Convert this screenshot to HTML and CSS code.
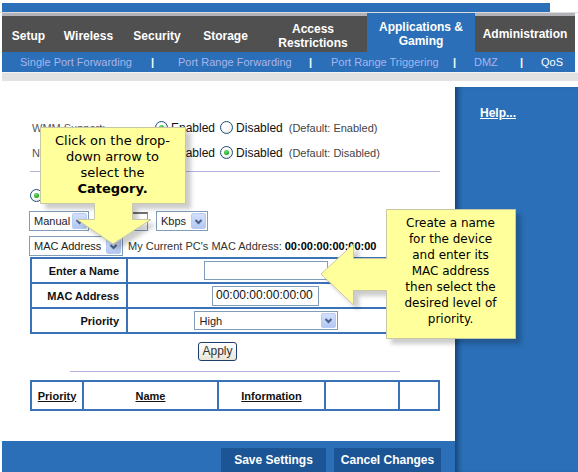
FILE: index.html
```html
<!DOCTYPE html>
<html>
<head>
<meta charset="utf-8">
<link rel="stylesheet" href="styles.css">
</head>
<body>
<div class="page">
  <div class="topband"><div class="topblue"></div></div>
  <nav class="tabs">
    <div class="tab t-setup">Setup</div>
    <div class="tab t-wireless">Wireless</div>
    <div class="tab t-security">Security</div>
    <div class="tab t-storage">Storage</div>
    <div class="tab t-access">Access<br>Restrictions</div>
    <div class="tab t-apps active">Applications &amp;<br>Gaming</div>
    <div class="tab t-admin">Administration</div>
  </nav>
  <div class="subnav">
    <span class="sublink l1">Single Port Forwarding</span><span class="sep p1">|</span>
    <span class="sublink l2">Port Range Forwarding</span><span class="sep p2">|</span>
    <span class="sublink l3">Port Range Triggering</span><span class="sep p3">|</span>
    <span class="sublink l4">DMZ</span><span class="sep p4">|</span>
    <span class="sublink current">QoS</span>
  </div>
  <div class="graystrip"></div>
  <div class="main">
    <div class="left">
      <div class="content">
        <div class="optrow">
          <span class="lbl">WMM Support:</span>
          <span class="radio on"></span><span class="rtext">Enabled</span>
          <span class="radio r2"></span><span class="rtext">Disabled</span>
          <span class="note">(Default: Enabled)</span>
        </div>
        <div class="optrow">
          <span class="lbl">No Acknowledgement:</span>
          <span class="radio"></span><span class="rtext">Enabled</span>
          <span class="radio on r2"></span><span class="rtext">Disabled</span>
          <span class="note">(Default: Disabled)</span>
        </div>
        <div class="hline"></div>
        <div class="row4"><span class="radio on"></span></div>
        <div class="row5">
          <div class="sel s-manual"><span>Manual</span><span class="arr"><svg width="13" height="13" viewBox="0 0 13 13"><path d="M3.5 5 L6.5 8 L9.5 5" fill="none" stroke="#4d6185" stroke-width="2"/></svg></span></div>
          <div class="txt t-bw"></div>
          <div class="sel s-kbps"><span>Kbps</span><span class="arr"><svg width="13" height="13" viewBox="0 0 13 13"><path d="M3.5 5 L6.5 8 L9.5 5" fill="none" stroke="#4d6185" stroke-width="2"/></svg></span></div>
        </div>
        <div class="row6">
          <div class="sel s-mac"><span>MAC Address</span><span class="arr"><svg width="13" height="13" viewBox="0 0 13 13"><path d="M3.5 5 L6.5 8 L9.5 5" fill="none" stroke="#4d6185" stroke-width="2"/></svg></span></div>
          <span class="pcmac">My Current PC's MAC Address: <b>00:00:00:00:00:00</b></span>
        </div>
        <table class="form">
          <tr><td class="flbl">Enter a Name</td><td class="fval"><div class="txt t-name"></div></td></tr>
          <tr><td class="flbl">MAC Address</td><td class="fval"><div class="txt t-macval">00:00:00:00:00:00</div></td></tr>
          <tr><td class="flbl">Priority</td><td class="fval"><div class="sel s-high"><span>High</span><span class="arr"><svg width="13" height="13" viewBox="0 0 13 13"><path d="M3.5 5 L6.5 8 L9.5 5" fill="none" stroke="#4d6185" stroke-width="2"/></svg></span></div></td></tr>
        </table>
        <div class="apply">Apply</div>
        <div class="hline short"></div>
        <table class="list">
          <tr>
            <td class="c1"><u>Priority</u></td>
            <td class="c2"><u>Name</u></td>
            <td class="c3"><u>Information</u></td>
            <td class="c4"></td>
            <td class="c5"></td>
          </tr>
        </table>
      </div>
      <div class="bottombar">
        <div class="btn b-save">Save Settings</div>
        <div class="btn b-cancel">Cancel Changes</div>
      </div>
    </div>
    <div class="right"><span class="help">Help...</span></div>
  </div>

  <svg class="callouts" width="578" height="472" viewBox="0 0 578 472">
    <path class="bubble" d="M40.5,127.5 H185.5 V203.5 H132.5 V219.5 H151 L113,244 L77,219.5 H94.5 V203.5 H40.5 Z"/>
    <path class="bubble" d="M386.5,209.5 H515.5 V338.5 H386.5 V290.5 H353.5 V305 L321,274 L353.5,244 V258.5 H386.5 Z"/>
  </svg>
  <div class="ctext c-one">Click on the drop-<br>down arrow to<br>select the<br><b>Category.</b></div>
  <div class="ctext c-two">Create a name<br>for the device<br>and enter its<br>MAC address<br>then select the<br>desired level of<br>priority.</div>
</div>
</body>
</html>
```

FILE: styles.css
```css
html, body {
  margin: 0;
  padding: 0;
  background: #ffffff;
}
.page {
  position: relative;
  width: 578px;
  height: 472px;
  overflow: hidden;
  background: #ffffff;
  font-family: "Liberation Sans", Arial, sans-serif;
}
.topband {
  height: 13px;
  box-sizing: border-box;
  padding: 3px 0 0 2px;
  border-bottom: 1px solid #dcdcdc;
}
.topblue {
  width: 548px;
  height: 9px;
  background: #2a6fb7;
}
.tabs {
  display: flex;
  margin-left: 2px;
  width: 573px;
  height: 39px;
}
.tab {
  box-sizing: border-box;
  height: 39px;
  background: #505050;
  border-top: 3px solid #b2b2b8;
  color: #ffffff;
  font-weight: bold;
  font-size: 12px;
  line-height: 14px;
  text-align: center;
  display: flex;
  align-items: center;
  justify-content: center;
  padding-top: 4px;
}
.t-setup { width: 53px; }
.t-wireless { width: 67px; }
.t-security { width: 70px; }
.t-storage { width: 67px; }
.t-access { width: 108px; }
.t-apps { width: 108px; }
.t-admin { width: 100px; padding-top: 0; }
.tab.active {
  background: #2a6fb7;
  border-top-color: #2a6fb7;
  padding-top: 0;
}
.subnav {
  margin-left: 2px;
  width: 573px;
  height: 20px;
  background: #2a6fb7;
  display: flex;
  align-items: center;
  box-sizing: border-box;
  padding-left: 18px;
  font-size: 11px;
  white-space: nowrap;
}
.sublink { color: #a9b4ee; flex: none; }
.sublink.current { color: #ffffff; }
.sep { color: #ffffff; font-weight: bold; flex: none; }
.l1 { width: 131px; }
.p1 { width: 27px; }
.l2 { width: 131px; }
.p2 { width: 22px; }
.l3 { width: 122px; }
.p3 { width: 21px; }
.l4 { width: 46px; }
.p4 { width: 21px; }
.graystrip {
  margin-left: 2px;
  width: 576px;
  height: 9px;
  box-sizing: border-box;
  border-top: 1px solid #f4f4f4;
  background: #e2e2e2;
}
.main {
  display: flex;
  height: 391px;
}
.left {
  margin-left: 2px;
  width: 453px;
  display: flex;
  flex-direction: column;
}
.content {
  flex: 1;
  box-sizing: border-box;
  padding: 34px 0 0 28px;
}
.optrow {
  height: 25px;
  display: flex;
  align-items: center;
  padding-left: 2px;
}
.lbl {
  width: 123px;
  font-size: 11px;
  color: #555555;
  white-space: nowrap;
  overflow: hidden;
}
.radio {
  box-sizing: border-box;
  width: 13px;
  height: 13px;
  border: 1px solid #1c5180;
  border-radius: 50%;
  background: radial-gradient(circle at 40% 35%, #ffffff 30%, #dcdcd5 100%);
  display: flex;
  align-items: center;
  justify-content: center;
  flex: none;
}
.radio.on::after {
  content: "";
  width: 5px;
  height: 5px;
  border-radius: 50%;
  background: radial-gradient(circle at 40% 35%, #6fe36f 0%, #21a121 70%);
}
.rtext {
  margin-left: 3px;
  font-size: 12px;
  color: #111111;
}
.radio.r2 { margin-left: 5px; }
.note {
  margin-left: 6px;
  font-size: 11px;
  color: #444444;
}
.hline {
  margin-top: 6px;
  width: 410px;
  height: 1px;
  background: #b6b6e6;
}
.hline.short {
  margin-top: 10px;
  margin-left: 40px;
  width: 330px;
}
.row4 {
  margin-top: 11px;
  height: 24px;
  display: flex;
  align-items: center;
}
.row5 {
  margin-top: 4px;
  height: 20px;
  display: flex;
  align-items: center;
}
.row6 {
  margin-top: 5px;
  height: 20px;
  display: flex;
  align-items: center;
}
.sel {
  box-sizing: border-box;
  height: 20px;
  border: 1px solid #7f9db9;
  background: #ffffff;
  display: flex;
  align-items: center;
  justify-content: space-between;
  padding: 0 1px 0 4px;
  font-size: 11px;
  color: #222222;
}
.arr {
  box-sizing: border-box;
  width: 15px;
  height: 16px;
  border: 1px solid #b9cbf3;
  border-radius: 2px;
  background: linear-gradient(#d3e0fc, #b3c8f4);
  display: flex;
  align-items: center;
  justify-content: center;
}
.s-manual { width: 60px; margin-left: -1px; }
.s-kbps { width: 52px; margin-left: 8px; }
.s-mac { width: 94px; margin-left: -1px; }
.s-high { width: 144px; height: 19px; padding-left: 5px; font-size: 11px; }
.s-high .arr { height: 15px; }
.txt {
  box-sizing: border-box;
  border: 1px solid #7f9db9;
  background: #ffffff;
  height: 19px;
  font-size: 12px;
  color: #111111;
  line-height: 17px;
}
.t-bw {
  width: 40px;
  margin-left: 19px;
  border-top: 2px solid #707070;
}
.pcmac {
  margin-left: 5px;
  font-size: 11px;
  color: #333333;
}
.pcmac b { color: #000000; }
.form, .list {
  border-collapse: collapse;
  width: 410px;
}
.form { margin-top: 1px; }
.form td, .list td {
  border: 2px solid #3a72b8;
  padding: 0;
}
.form tr { height: 25px; }
.flbl {
  width: 87px;
  text-align: right;
  padding-right: 7px !important;
  font-size: 11px;
  font-weight: bold;
  color: #111111;
  white-space: nowrap;
}
.fval {
  padding-right: 35px !important;
}
.fval > div { margin: 0 auto; }
.t-name { width: 124px; }
.t-macval { width: 107px; height: 20px; padding-left: 3px; }
.apply {
  box-sizing: border-box;
  margin-top: 8px;
  margin-left: 168px;
  width: 39px;
  height: 19px;
  border: 1px solid #1c3f6e;
  border-radius: 3px;
  background: linear-gradient(#ffffff, #e9e6d8);
  font-size: 12px;
  color: #333333;
  text-align: center;
  line-height: 17px;
}
.list {
  margin-top: 8px;
}
.list tr { height: 29px; }
.list td {
  text-align: center;
  font-size: 11px;
  font-weight: bold;
  color: #111111;
}
.c1 { width: 50px; }
.c2 { width: 133px; }
.c3 { width: 105px; }
.c4 { width: 72px; }
.bottombar {
  height: 31px;
  background: #2a6fb7;
  display: flex;
  padding-left: 219px;
  gap: 8px;
  align-items: flex-end;
}
.btn {
  height: 24px;
  background: #1b5596;
  color: #ffffff;
  font-size: 12px;
  font-weight: bold;
  display: flex;
  align-items: center;
  justify-content: center;
}
.b-save { width: 105px; }
.b-cancel { width: 107px; }
.right {
  margin-top: 6px;
  width: 123px;
  background: #2a6fb7;
  box-shadow: inset 6px 0 5px -3px rgba(10, 30, 60, 0.55);
  box-sizing: border-box;
  padding: 16px 0 0 25px;
}
.help {
  color: #ffffff;
  font-size: 12px;
  font-weight: bold;
  text-decoration: underline;
  line-height: 14px;
}
.callouts {
  position: absolute;
  left: 0;
  top: 0;
  pointer-events: none;
}
.bubble {
  fill: #ffff9c;
  stroke: #c8c8a6;
  stroke-width: 1;
  filter: drop-shadow(5px 5px 2px rgba(0, 0, 0, 0.2));
}
.ctext {
  position: absolute;
  font-family: "DejaVu Sans", Verdana, sans-serif;
  color: #000000;
  text-align: center;
  line-height: 16px;
}
.c-one {
  left: 40px;
  top: 133px;
  width: 145px;
  font-size: 13px;
}
.c-two {
  left: 386px;
  top: 215px;
  width: 129px;
  font-size: 12px;
}
```
